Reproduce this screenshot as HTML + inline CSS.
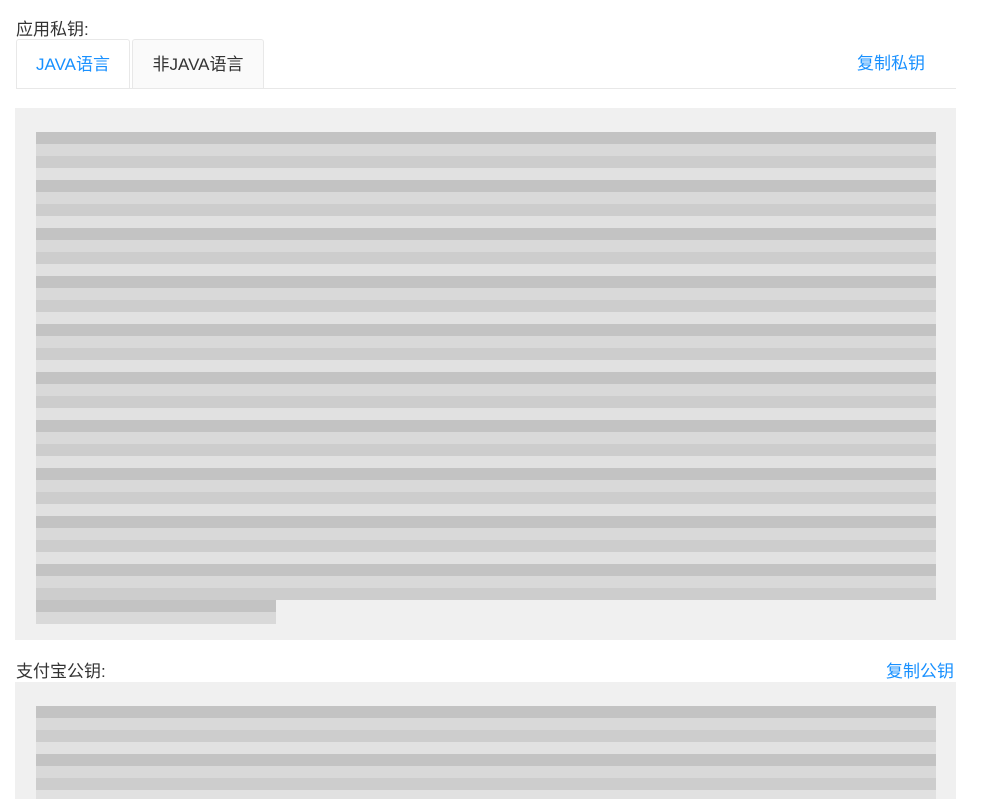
<!DOCTYPE html>
<html><head><meta charset="utf-8"><style>
*{margin:0;padding:0;box-sizing:border-box}
body{width:985px;height:799px;background:#fff;position:relative;overflow:hidden;font-family:"Liberation Sans","Noto Sans CJK SC",sans-serif;font-size:17px;color:#333}
.a{position:absolute}
.lbl{color:#333;font-size:17px}
.link{color:#1890ff;font-size:17px}
.tab{position:absolute;top:39px;height:50px;border:1px solid #e8e8e8;border-bottom:none;border-radius:3px 3px 0 0;line-height:50px;text-align:center;font-size:17px}
.bg{position:absolute;left:15px;width:941px;background:#f0f0f0}
.txt{position:absolute;left:36px;width:900px;background:repeating-linear-gradient(to bottom,#c3c3c3 0,#c3c3c3 12px,#d9d9d9 12px,#d9d9d9 24px,#cdcdcd 24px,#cdcdcd 36px,#e1e1e1 36px,#e1e1e1 48px)}
</style></head><body>
<div class="a lbl" style="left:16px;top:15px">应用私钥:</div>
<div class="tab" style="left:16px;width:114px;background:#fff;color:#1890ff">JAVA语言</div>
<div class="tab" style="left:132px;width:132px;background:#fafafa;color:#333">非JAVA语言</div>
<div class="a" style="left:16px;top:88px;width:940px;height:1px;background:#e8e8e8"></div>
<div class="a link" style="left:857px;top:49px">复制私钥</div>
<div class="bg" style="top:108px;height:532px"></div>
<div class="txt" style="top:132px;height:468px"></div>
<div class="txt" style="top:600px;height:24px;width:240px"></div>
<div class="a lbl" style="left:16px;top:657px">支付宝公钥:</div>
<div class="a link" style="left:886px;top:657px">复制公钥</div>
<div class="bg" style="top:682px;height:117px"></div>
<div class="txt" style="top:706px;height:93px"></div>
</body></html>
